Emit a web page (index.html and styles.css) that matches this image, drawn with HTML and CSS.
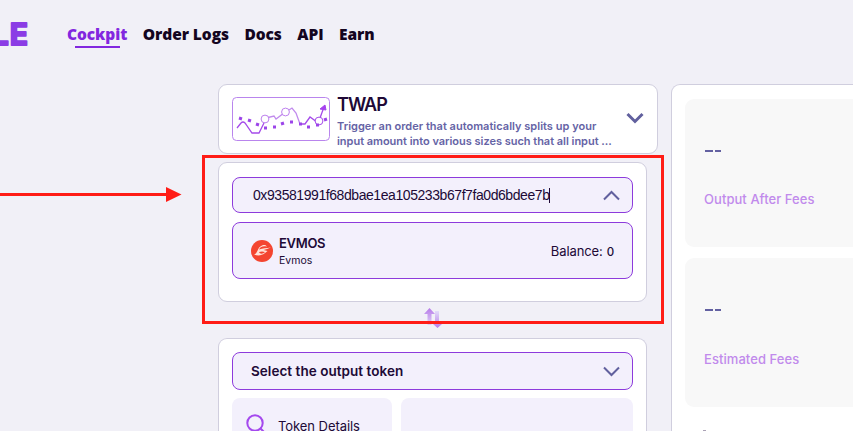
FILE: index.html
```html
<!DOCTYPE html>
<html lang="en">
<head>
<meta charset="utf-8">
<title>Cockpit</title>
<link rel="stylesheet" href="styles.css">
</head>
<body>
<header class="header">
  <svg class="logo" width="29" height="40" viewBox="0 0 29 40"><text x="29" y="30.800" text-anchor="end">LE</text></svg>
  <nav class="nav">
    <a class="active">Cockpit</a><a>Order Logs</a><a>Docs</a><a>API</a><a>Earn</a>
  </nav>
</header>
<main class="main">
  <section class="orders">
    <div class="card strategy">
      <svg class="chart" width="98" height="44" viewBox="0 0 98 44" fill="none">
        <rect x=".5" y=".5" width="97" height="43" rx="4" stroke="#b985ed"/>
        <path d="M5 31l4-5q2-2 4 0l7 10h7l5-10M69 27h4l5-7 7 5h4" stroke="#a54bea" stroke-width="1.3"/>
        <path d="M34 21l8-2 2 3 8-6M57 13l3-2 4 5 4 11" stroke="#c18bed" stroke-width="1.3"/>
        <path d="M88 21l4-11" stroke="#a54bea" stroke-width="1.3"/>
        <path d="M93 8l-5 4 6 1z" fill="#a642ee" stroke="#a642ee"/>
        <g fill="#fff" stroke="#bd80ee"><circle cx="33" cy="22" r="3.9"/><circle cx="53.500" cy="15" r="3.9"/><circle cx="87" cy="24" r="3.9" stroke="#a54bea"/></g>
        <path d="M7 21l3 1M16 23l3 1M24 27l3 1M32 31h3M41 30h3M49 27l3-1M58 25h3M67 27h3M75 30h3M84 28h3M92 23l3-1" stroke="#9c45e9" stroke-width="3"/>
      </svg>
      <div class="strategy-text">
        <h2>TWAP</h2>
        <p><span class="line-one">Trigger an order that automatically splits up your</span><br><span class="line-two">input amount into various sizes such that all input ...</span></p>
      </div>
      <svg class="chevron-bold" width="18" height="12" viewBox="0 0 18 12" fill="none"><path d="M1.500 2L9 9.500 16.500 2" stroke="#61609e" stroke-width="3"/></svg>
    </div>
    <div class="card input-card">
      <div class="field address">
        <span class="address-text">0x93581991f68dbae1ea105233b67f7fa0d6bdee7b</span><i class="caret"></i>
        <svg class="chevron" width="17" height="11" viewBox="0 0 17 11" fill="none"><path d="M1 9.500l7.500-7.500L16 9.500" stroke="#61609e" stroke-width="2"/></svg>
      </div>
      <div class="field token">
        <svg width="22" height="22" viewBox="0 0 22 22"><circle cx="11" cy="11" r="11" fill="#f44530"/><path d="M3 14.500C7 13.500 6 7.500 11 5.500c3-1 4 0 5 1-4-.8-6.500 0-8 3 4-1 7-1.500 12-2-3 1.200-5 1.800-7.500 2.500l4 1c-4 4-8 5.500-13.500 3.500zm5-2.500c1 2.500 4 2 6 0-2-.8-4-.8-6 0z" fill="#ffe4da"/></svg>
        <div class="token-name"><b>EVMOS</b><span>Evmos</span></div>
        <div class="balance"><span class="balance-label">Balance:</span> <span class="amount">0</span></div>
      </div>
    </div>
    <div class="swap">
      <svg width="18" height="22" viewBox="0 0 18 22">
        <defs><linearGradient id="up" x2="0" y2="1"><stop stop-color="#b77be9"/><stop offset="1" stop-color="#dfd0f7"/></linearGradient><linearGradient id="down" x2="0" y2="1"><stop stop-color="#e2dcf9"/><stop offset="1" stop-color="#b77be9"/></linearGradient></defs>
        <path d="M5.500 0L11 6H7.500v11h-4V6H0z" fill="url(#up)"/><path d="M11 3h4v13h3l-4.500 4L9 16h2z" fill="url(#down)"/>
      </svg>
    </div>
    <div class="card output-card">
      <div class="field select"><b>Select the output token</b>
        <svg class="chevron" width="17" height="11" viewBox="0 0 17 11" fill="none"><path d="M1 1.500L8.500 9 16 1.500" stroke="#61609e" stroke-width="2"/></svg>
      </div>
      <div class="tiles">
        <div class="tile details"><svg width="20" height="17" viewBox="0 0 20 17" fill="none" stroke="#a448ee" stroke-width="2"><circle cx="9" cy="9" r="7.700"/><path d="M14 14l4 4"/></svg><span>Token Details</span></div>
        <div class="tile"></div>
      </div>
    </div>
    <div class="highlight"></div>
  </section>
  <aside class="card summary">
    <div class="stat"><div class="dashes"><i></i><i></i></div><span class="fees-output">Output After Fees</span></div>
    <div class="stat"><div class="dashes"><i></i><i></i></div><span class="fees-estimated">Estimated Fees</span></div>
    <div class="more"></div>
  </aside>
</main>
<svg class="arrow" width="182" height="16" viewBox="0 0 182 16"><path d="M0 7.500h168" stroke="#ff1c16" stroke-width="3"/><path d="M166 0L181.500 7.500 166 15z" fill="#ff1c16"/></svg>
</body>
</html>
```
FILE: styles.css
```css
* { box-sizing: border-box; }
body { margin: 0; width: 853px; height: 431px; overflow: hidden; position: relative; background: #f1f0f7; color: #200936; font-family: Inter, sans-serif; }
svg { display: block; flex: none; }
.header { height: 84px; display: flex; align-items: flex-start; }
.logo { margin-top: 14px; }
.logo text { font-size: 30px; font-weight: 700; letter-spacing: 1px; fill: #8b3ce5; stroke: #8b3ce5; stroke-width: 2px; stroke-linejoin: round; }
.nav { display: flex; gap: 15.500px; margin: 23px 0 0 38px; font: 800 15.500px/23px "Open Sans", sans-serif; letter-spacing: -.06px; color: #14051f; white-space: nowrap; }
.nav a { display: block; }
.nav .active { color: #8227df; }
.nav .active::after { content: ""; display: block; width: 45px; height: 2px; margin-left: 8px; background: #8227df; }
.main { display: grid; grid-template-columns: 440px 182px; column-gap: 13px; padding-left: 218px; height: 347px; }
.orders { position: relative; display: flex; flex-direction: column; min-width: 0; }
.card { background: #fff; border: 1px solid #d0cede; border-radius: 9px; flex: none; }
.strategy { height: 70px; display: flex; align-items: flex-start; padding: 12px 13px 0; }
.strategy-text { margin-left: 7px; width: 289px; white-space: nowrap; }
.strategy h2 { margin: -3px 0 0; font-size: 18px; line-height: 22px; font-weight: 600; letter-spacing: -1px; }
.strategy p { margin: 3px 0 0; font-size: 11px; line-height: 15px; font-weight: 600; color: #6563a5; }
.line-one { letter-spacing: .02px; }
.line-two { letter-spacing: -.02px; }
.chevron-bold { margin-top: 15px; }
.input-card { width: 429px; height: 140px; margin-top: 8px; padding: 14px 13px; }
.field { display: flex; align-items: center; background: #f3f0fc; border: 1px solid #8d3bdc; border-radius: 8px; }
.address { height: 36px; padding: 0 12px 0 20px; font: 14px "Liberation Sans", sans-serif; letter-spacing: -.43px; }
.caret { width: 1px; height: 15px; background: #200936; }
.chevron { margin-left: auto; }
.token { height: 57px; margin-top: 9px; padding: 0 18px; }
.token-name { margin: 3px 0 0 6px; display: flex; flex-direction: column; }
.token-name b { font-size: 13px; line-height: 17px; font-weight: 600; letter-spacing: -.3px; }
.token-name span { font-size: 10.500px; line-height: 17px; }
.balance { margin-left: auto; display: flex; align-items: baseline; gap: 4px; font-size: 13px; letter-spacing: -.1px; }
.amount { font-size: 11.500px; font-weight: 500; }
.swap { height: 36px; padding: 6px 0 0 206px; }
.output-card { width: 429px; height: 93px; padding: 13px 13px 0; border-bottom: 0; border-radius: 9px 9px 0 0; }
.select { height: 38px; padding: 0 12px 0 18px; font-size: 13.500px; }
.select b { font-weight: 600; letter-spacing: .04px; }
.tiles { display: grid; grid-template-columns: 160px 232px; gap: 9px; margin-top: 8px; }
.tile { height: 33px; background: #f3f0fc; border-radius: 8px 8px 0 0; }
.details { display: flex; align-items: flex-start; padding: 16px 14px 0; font-size: 13px; }
.details span { height: 14px; margin: 3px 0 0 12px; line-height: 18px; letter-spacing: -.06px; }
.summary { border-right: 0; border-bottom: 0; border-radius: 9px 0 0; padding: 14px 0 0 13px; height: 347px; }
.stat { height: 148px; margin-bottom: 11px; padding: 51px 0 0 19px; background: #f8f8f8; border-radius: 9px 0 0 9px; color: #c18aec; font-size: 13px; font-weight: 500; white-space: nowrap; }
.stat + .stat { height: 149px; }
.dashes { display: flex; gap: 2px; height: 40px; padding-left: 1px; }
.stat + .stat .dashes { height: 41px; }
.dashes i { width: 8px; height: 2px; background: #6361a1; }
.dashes i + i { width: 6px; }
.stat span { display: block; line-height: 18px; }
.fees-output, .fees-estimated { letter-spacing: .06px; }
.more { width: 3px; height: 1px; margin: 23px 0 0 18px; background: #aaa1b5; }
.highlight { position: absolute; left: -16px; top: 71px; width: 462px; height: 169px; border: 3px solid #ff1c16; }
.arrow { position: absolute; left: 0; top: 187px; }
```
